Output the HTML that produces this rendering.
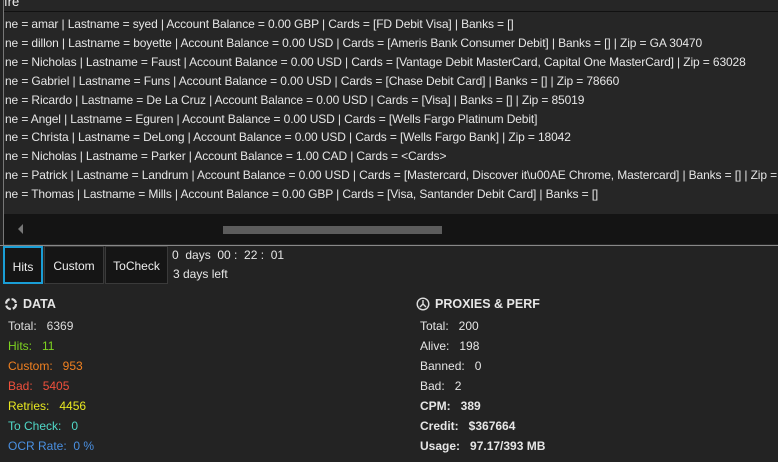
<!DOCTYPE html>
<html><head><style>
body{margin:0;width:778px;height:462px;background:#232323;font-family:"Liberation Sans",sans-serif;font-size:12px;color:#e6e6e6;position:relative;overflow:hidden}
.top{position:absolute;left:3px;top:0;width:775px;height:245px;background:#262626;border-left:1px solid #777;}
.hdr{position:absolute;left:0;top:-6px;height:17px;font-size:13px;color:#eee}
.hline{position:absolute;left:0;top:11px;width:775px;height:1px;background:#111}
.rows{position:absolute;left:1px;top:15px;white-space:nowrap;line-height:18.9px;letter-spacing:-0.12px}
.sb{position:absolute;left:0;top:214px;width:775px;height:30px;background:#141414}
.thumb{position:absolute;left:219px;top:12px;width:219px;height:8px;background:#5c5c5c}
.arr{position:absolute;left:14px;top:10px;width:0;height:0;border-top:5px solid transparent;border-bottom:5px solid transparent;border-right:5px solid #777}
.bline{position:absolute;left:0;top:245px;width:778px;height:1px;background:#888}
.btn{position:absolute;top:246px;height:38px;background:#151515;border:1px solid #3a3a3a;box-sizing:border-box;line-height:38px;text-align:center;color:#eee}
.st{position:absolute;line-height:20px;white-space:pre}
.h{font-weight:bold;font-size:12.5px}
</style></head><body>
<div class="top">
<div class="hdr">ıre</div><div class="hline"></div>
<div class="rows">
ne = amar | Lastname = syed | Account Balance = 0.00 GBP | Cards = [FD Debit Visa] | Banks = []<br>
ne = dillon | Lastname = boyette | Account Balance = 0.00 USD | Cards = [Ameris Bank Consumer Debit] | Banks = [] | Zip = GA 30470<br>
ne = Nicholas | Lastname = Faust | Account Balance = 0.00 USD | Cards = [Vantage Debit MasterCard, Capital One MasterCard] | Zip = 63028<br>
ne = Gabriel | Lastname = Funs | Account Balance = 0.00 USD | Cards = [Chase Debit Card] | Banks = [] | Zip = 78660<br>
ne = Ricardo | Lastname = De La Cruz | Account Balance = 0.00 USD | Cards = [Visa] | Banks = [] | Zip = 85019<br>
ne = Angel | Lastname = Eguren | Account Balance = 0.00 USD | Cards = [Wells Fargo Platinum Debit]<br>
ne = Christa | Lastname = DeLong | Account Balance = 0.00 USD | Cards = [Wells Fargo Bank] | Zip = 18042<br>
ne = Nicholas | Lastname = Parker | Account Balance = 1.00 CAD | Cards = &lt;Cards&gt;<br>
ne = Patrick | Lastname = Landrum | Account Balance = 0.00 USD | Cards = [Mastercard, Discover it\u00AE Chrome, Mastercard] | Banks = [] | Zip = 92<br>
ne = Thomas | Lastname = Mills | Account Balance = 0.00 GBP | Cards = [Visa, Santander Debit Card] | Banks = []
</div>
<div class="sb"><div class="arr"></div><div class="thumb"></div></div>
</div>
<div class="bline"></div>
<div class="btn" style="left:3px;width:40px;border:2px solid #1a9ed6">Hits</div>
<div class="btn" style="left:44px;width:60px">Custom</div>
<div class="btn" style="left:105px;width:63px">ToCheck</div>
<div class="st" style="left:172px;top:245px">0  days  00 :  22 :  01</div>
<div class="st" style="left:173px;top:264px">3 days left</div>
<svg style="position:absolute;left:4px;top:297px" width="14" height="14"><circle cx="7" cy="7" r="5" fill="none" stroke="#ddd" stroke-width="2.2" stroke-dasharray="6 2"/></svg>
<div class="st h" style="left:23px;top:294px">DATA</div>
<div class="st" style="left:8px;top:316px;color:#ddd">Total:   6369</div>
<div class="st" style="left:8px;top:336px;color:#7ed321">Hits:   11</div>
<div class="st" style="left:8px;top:356px;color:#f08020">Custom:   953</div>
<div class="st" style="left:8px;top:376px;color:#f0503c">Bad:   5405</div>
<div class="st" style="left:8px;top:396px;color:#e8e820">Retries:   4456</div>
<div class="st" style="left:8px;top:416px;color:#50d8c8">To Check:   0</div>
<div class="st" style="left:8px;top:436px;color:#4a90e2">OCR Rate:  0 %</div>
<svg style="position:absolute;left:416px;top:297px" width="14" height="14"><circle cx="7" cy="7" r="5.8" fill="none" stroke="#ddd" stroke-width="1.4"/><path d="M7 3v4M4 10l3-3 3 3" stroke="#ddd" stroke-width="1.4" fill="none"/></svg>
<div class="st h" style="left:435px;top:294px">PROXIES &amp; PERF</div>
<div class="st" style="left:420px;top:316px">Total:   200</div>
<div class="st" style="left:420px;top:336px">Alive:   198</div>
<div class="st" style="left:420px;top:356px">Banned:   0</div>
<div class="st" style="left:420px;top:376px">Bad:   2</div>
<div class="st" style="left:420px;top:396px;font-weight:bold">CPM:   389</div>
<div class="st" style="left:420px;top:416px;font-weight:bold">Credit:   $367664</div>
<div class="st" style="left:420px;top:436px;font-weight:bold">Usage:   97.17/393 MB</div>
</body></html>
